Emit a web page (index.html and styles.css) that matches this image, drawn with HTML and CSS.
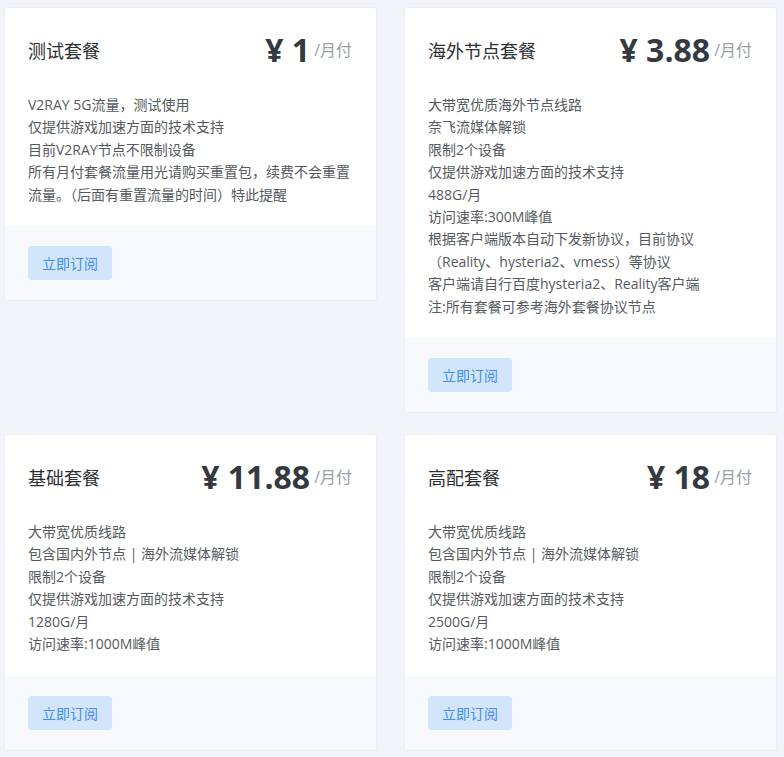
FILE: index.html
```html
<!DOCTYPE html>
<html lang="zh-CN">
<head>
<meta charset="utf-8">
<title>套餐</title>
<link rel="stylesheet" href="styles.css">
</head>
<body>
<div class="plans">
  <div class="card">
    <div class="card-head">
      <div class="title">测试套餐</div>
      <div class="price"><span class="amount">¥ 1</span><span class="unit">/月付</span></div>
    </div>
    <div class="card-body">
      <div>V2RAY 5G流量，测试使用</div>
      <div>仅提供游戏加速方面的技术支持</div>
      <div>目前V2RAY节点不限制设备</div>
      <div>所有月付套餐流量用光请购买重置包，续费不会重置流量。（后面有重置流量的时间）特此提醒</div>
    </div>
    <div class="card-foot"><button class="btn">立即订阅</button></div>
  </div>
  <div class="card">
    <div class="card-head">
      <div class="title">海外节点套餐</div>
      <div class="price"><span class="amount">¥ 3.88</span><span class="unit">/月付</span></div>
    </div>
    <div class="card-body">
      <div>大带宽优质海外节点线路</div>
      <div>奈飞流媒体解锁</div>
      <div>限制2个设备</div>
      <div>仅提供游戏加速方面的技术支持</div>
      <div>488G/月</div>
      <div>访问速率:300M峰值</div>
      <div>根据客户端版本自动下发新协议，目前协议</div>
      <div>（Reality、hysteria2、vmess）等协议</div>
      <div>客户端请自行百度hysteria2、Reality客户端</div>
      <div>注:所有套餐可参考海外套餐协议节点</div>
    </div>
    <div class="card-foot"><button class="btn">立即订阅</button></div>
  </div>
  <div class="card">
    <div class="card-head">
      <div class="title">基础套餐</div>
      <div class="price"><span class="amount">¥ 11.88</span><span class="unit">/月付</span></div>
    </div>
    <div class="card-body">
      <div>大带宽优质线路</div>
      <div>包含国内外节点 | 海外流媒体解锁</div>
      <div>限制2个设备</div>
      <div>仅提供游戏加速方面的技术支持</div>
      <div>1280G/月</div>
      <div>访问速率:1000M峰值</div>
    </div>
    <div class="card-foot"><button class="btn">立即订阅</button></div>
  </div>
  <div class="card">
    <div class="card-head">
      <div class="title">高配套餐</div>
      <div class="price"><span class="amount">¥ 18</span><span class="unit">/月付</span></div>
    </div>
    <div class="card-body">
      <div>大带宽优质线路</div>
      <div>包含国内外节点 | 海外流媒体解锁</div>
      <div>限制2个设备</div>
      <div>仅提供游戏加速方面的技术支持</div>
      <div>2500G/月</div>
      <div>访问速率:1000M峰值</div>
    </div>
    <div class="card-foot"><button class="btn">立即订阅</button></div>
  </div>
</div>
</body>
</html>
```

FILE: styles.css
```css
html, body {
  margin: 0;
  padding: 0;
  background: #f3f4f9;
}
body {
  font-family: "Open Sans", "Noto Sans CJK SC", sans-serif;
  color: #575757;
}
.plans {
  display: grid;
  grid-template-columns: 373px 373px;
  column-gap: 27px;
  row-gap: 21px;
  align-items: start;
  padding: 7px 0 8px 4px;
}
.card {
  background: #fff;
  border: 1px solid #eceef3;
  border-radius: 3px;
  overflow: hidden;
  box-sizing: border-box;
}
.card-head {
  display: flex;
  justify-content: space-between;
  align-items: center;
  height: 40px;
  padding: 22px 24px 0 23px;
}
.title {
  font-size: 18px;
  color: #2b2f33;
}
.price {
  display: flex;
  align-items: center;
}
.amount {
  font-size: 32px;
  font-weight: 700;
  color: #343a40;
  line-height: 40px;
}
.unit {
  font-size: 16px;
  color: #9aa0a8;
  margin-left: 4px;
  line-height: 20px;
}
.card-body {
  padding: 24px 23px 20px;
  font-size: 14px;
  line-height: 22.4px;
  color: #555a60;
}
.card-foot {
  background: #f8f9fc;
  padding: 20px 23px;
}
.btn {
  display: block;
  width: 84px;
  height: 34px;
  border: 0;
  border-radius: 3px;
  background: #d3e5fa;
  color: #3f8ef0;
  font-family: "Open Sans", "Noto Sans CJK SC", sans-serif;
  font-size: 14px;
  padding: 0;
}
```
